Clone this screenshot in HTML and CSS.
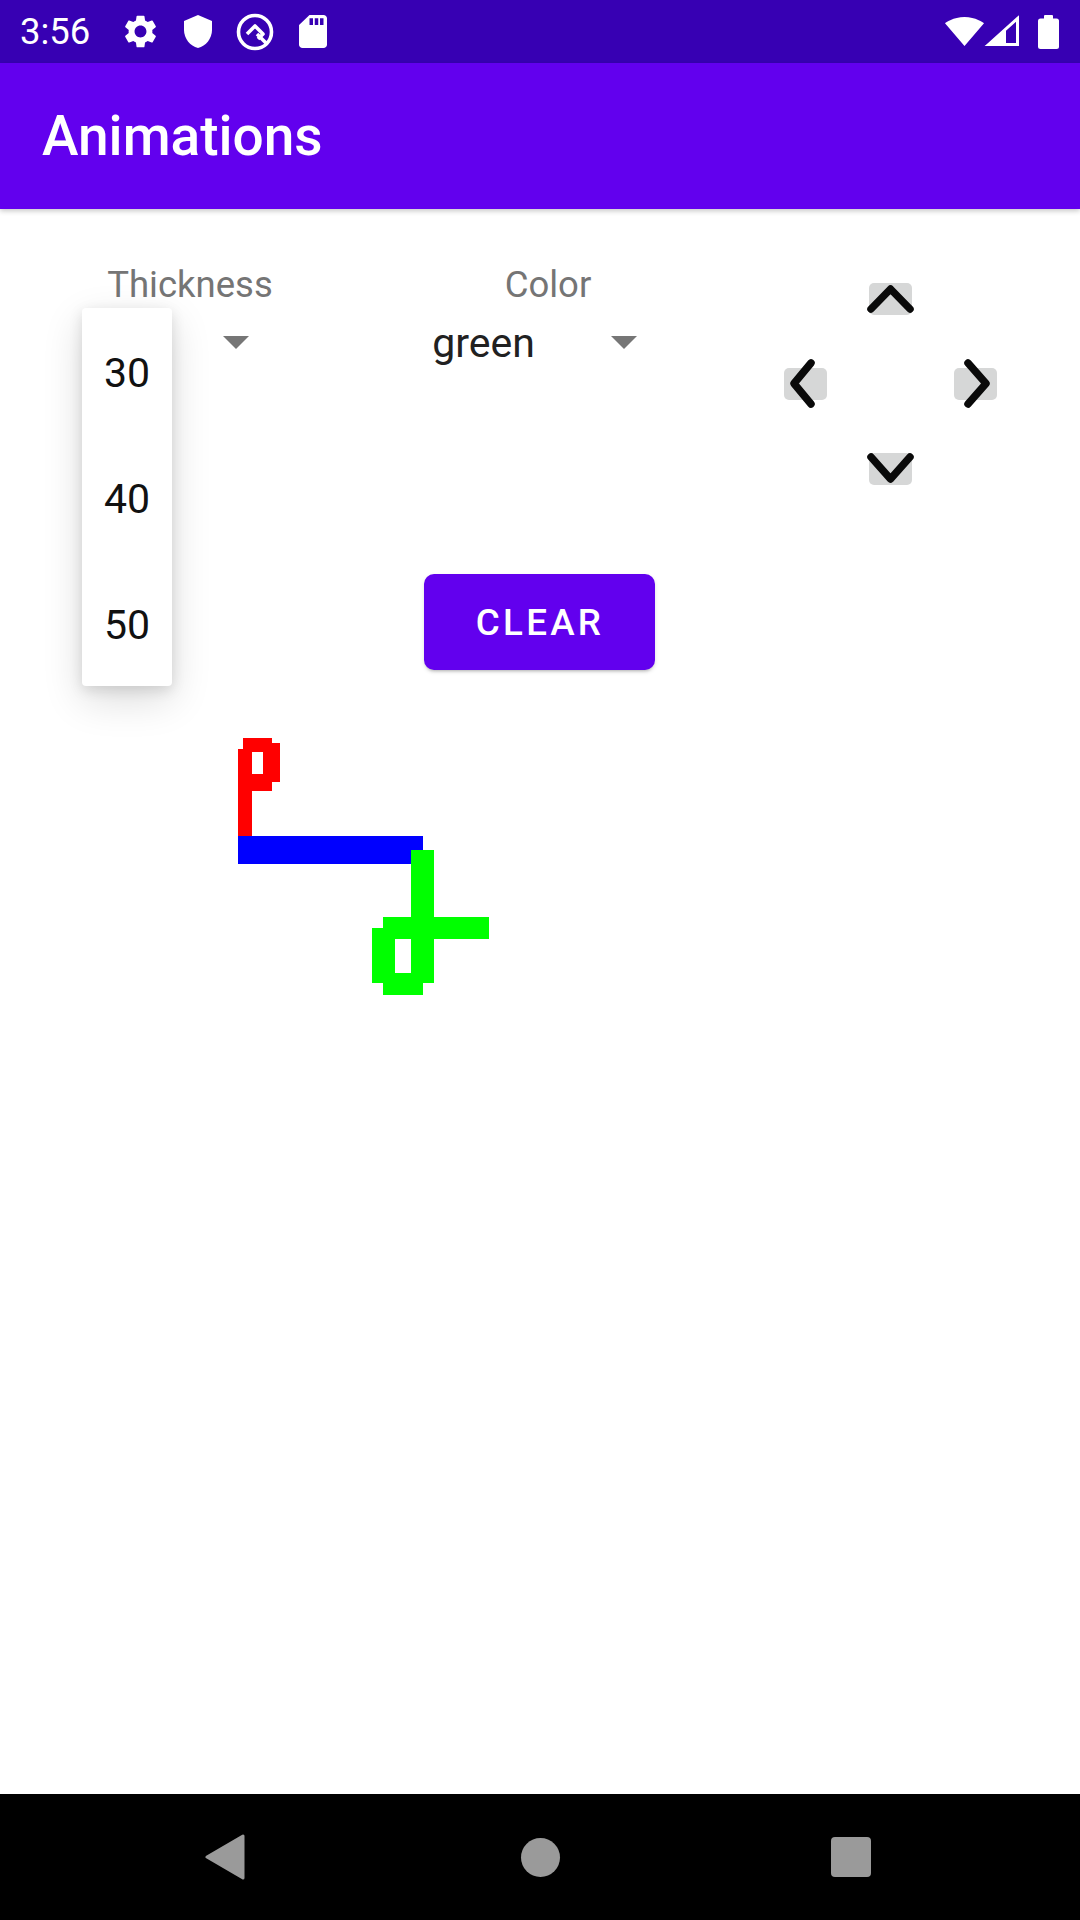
FILE: index.html
```html
<!DOCTYPE html>
<html lang="en">
<head>
<meta charset="utf-8">
<title>Animations</title>
<link rel="stylesheet" href="styles.css">
</head>
<body>
<div class="screen">
  <div class="statusbar">
    <div class="status-left">
      <span class="time">3:56</span>
      <svg class="ic ic-gear" viewBox="2 2 20 20"><path fill="#fff" d="M19.14 12.94c.04-.3.06-.61.06-.94 0-.32-.02-.64-.07-.94l2.030-1.58a.49.49 0 0 0 .12-.61l-1.92-3.32a.488.488 0 0 0-.59-.22l-2.39.96c-.5-.38-1.030-.7-1.62-.94l-.36-2.54a.484.484 0 0 0-.48-.41h-3.84c-.24 0-.43.17-.47.41l-.36 2.54c-.59.24-1.13.57-1.62.94l-2.39-.96c-.22-.08-.47 0-.59.22L2.74 8.87c-.12.21-.08.47.12.61l2.030 1.58c-.05.3-.09.63-.09.94s.02.64.07.94l-2.030 1.58a.49.49 0 0 0-.12.61l1.92 3.32c.12.22.37.29.59.22l2.39-.96c.5.38 1.030.7 1.62.94l.36 2.54c.05.24.24.41.48.41h3.84c.24 0 .44-.17.47-.41l.36-2.54c.59-.24 1.13-.56 1.62-.94l2.39.96c.22.08.47 0 .59-.22l1.92-3.32c.12-.22.07-.47-.12-.61l-2.01-1.58zM12 15.6c-1.98 0-3.6-1.62-3.6-3.6s1.62-3.6 3.6-3.6 3.6 1.62 3.6 3.6-1.62 3.6-3.6 3.6z"/></svg>
      <svg class="ic ic-shield" viewBox="3 1 18 22" preserveAspectRatio="none"><path fill="#fff" d="M12 1L3 5v6c0 5.55 3.84 10.74 9 12 5.16-1.26 9-6.45 9-12V5l-9-4z"/></svg>
      <svg class="ic ic-q" viewBox="0 0 38 38"><circle cx="19" cy="19" r="16.5" fill="none" stroke="#fff" stroke-width="3.6"/><path d="M11 21 L19 13 L27 21 L22 26" fill="none" stroke="#fff" stroke-width="3.6" stroke-linejoin="round"/><path d="M21 21 L31 31" stroke="#fff" stroke-width="3.6"/></svg>
      <svg class="ic ic-sd" viewBox="4 2 16 20" preserveAspectRatio="none"><path fill="#fff" d="M18 2h-8L4.02 8 4 20c0 1.1.9 2 2 2h12c1.1 0 2-.9 2-2V4c0-1.1-.9-2-2-2zm-6 6h-2V4h2v4zm3 0h-2V4h2v4zm3 0h-2V4h2v4z"/></svg>
    </div>
    <div class="status-right">
      <svg class="ic ic-wifi" viewBox="0.36 3 23.28 18.5" preserveAspectRatio="none"><path fill="#fff" d="M12.01 21.49L23.64 7c-.45-.34-4.93-4-11.64-4C5.28 3 .81 6.66.36 7l11.63 14.49.01.01.01-.01z"/></svg>
      <svg class="ic ic-signal" viewBox="0 0 32 29"><path d="M1.5 27.5 L30.5 1.5 L30.5 27.5 Z" fill="none" stroke="#fff" stroke-width="3" stroke-linejoin="miter"/><path d="M0 29 L19 12 L19 29 Z" fill="#fff"/></svg>
      <svg class="ic ic-battery" viewBox="0 0 21 34"><rect x="6" y="0" width="9" height="5" rx="1" fill="#fff"/><rect x="0" y="3.5" width="21" height="30.5" rx="2.5" fill="#fff"/></svg>
    </div>
  </div>

  <header class="appbar">
    <h1 class="title">Animations</h1>
  </header>

  <main class="content">
    <div class="controls">
      <div class="field field-thickness">
        <div class="label">Thickness</div>
        <div class="spinner">
          <span class="spinner-text spinner-text-hidden">30</span>
          <span class="caret"></span>
        </div>
      </div>
      <div class="field field-color">
        <div class="label">Color</div>
        <div class="spinner">
          <span class="spinner-text">green</span>
          <span class="caret"></span>
        </div>
      </div>
      <div class="dpad">
        <div class="dbtn dbtn-up"><svg viewBox="0 0 43 32"><path d="M2 26 L21.5 6 L41 26"/></svg></div>
        <div class="dbtn dbtn-left"><svg viewBox="0 0 43 32"><path d="M27 -5 L10 15.5 L27 36"/></svg></div>
        <div class="dbtn dbtn-right"><svg viewBox="0 0 43 32"><path d="M14 -5 L32 15.5 L14 36"/></svg></div>
        <div class="dbtn dbtn-down"><svg viewBox="0 0 43 32"><path d="M2 4 L21.5 26 L41 4"/></svg></div>
      </div>
    </div>

    <div class="actions">
      <button class="btn">Clear</button>
    </div>

    <div class="canvas">
      <svg class="drawing" viewBox="0 670 1080 1124" width="1080" height="1124">
        <g fill="#ff0000">
          <rect x="243" y="738" width="29" height="14"/>
          <rect x="263" y="743" width="17" height="39"/>
          <rect x="238" y="749" width="14" height="87"/>
          <rect x="238" y="774" width="34" height="17"/>
        </g>
        <rect x="238" y="836" width="185" height="28" fill="#0000ff"/>
        <g fill="#00ff00">
          <rect x="411" y="850" width="23" height="133"/>
          <rect x="383" y="917" width="106" height="22"/>
          <rect x="372" y="928" width="23" height="55"/>
          <rect x="372" y="973" width="62" height="10"/>
          <rect x="383" y="983" width="40" height="12"/>
        </g>
      </svg>
    </div>

    <ul class="popup">
      <li class="popup-item">30</li>
      <li class="popup-item">40</li>
      <li class="popup-item">50</li>
    </ul>
  </main>

  <nav class="navbar">
    <div class="nav-cell">
      <svg class="nav-back" viewBox="0 0 42 46"><path d="M39 2 L39 44 L3 23 Z" fill="#9a9a9a" stroke="#9a9a9a" stroke-width="3" stroke-linejoin="round"/></svg>
    </div>
    <div class="nav-cell"><span class="nav-home"></span></div>
    <div class="nav-cell"><span class="nav-recent"></span></div>
  </nav>
</div>
</body>
</html>
```

FILE: styles.css
```css
* { box-sizing: border-box; }

html, body {
  margin: 0;
  padding: 0;
  background: #ffffff;
}

body {
  font-family: Roboto, "Noto Sans", "Liberation Sans", sans-serif;
}

.screen {
  width: 1080px;
  height: 1920px;
  display: flex;
  flex-direction: column;
  overflow: hidden;
}

/* Status bar */
.statusbar {
  height: 63px;
  flex: 0 0 63px;
  background: #3700b3;
  display: flex;
  align-items: center;
  justify-content: space-between;
  padding-right: 21px;
  color: #fff;
}

.status-left,
.status-right {
  display: flex;
  align-items: center;
}

.time {
  width: 120px;
  padding-left: 20px;
  font-size: 36.5px;
  line-height: 63px;
  font-weight: 400;
}

.ic { display: block; }

.ic-gear { width: 33px; height: 33px; margin-left: 4px; }
.ic-shield { width: 28px; height: 33px; margin-left: 27px; }
.ic-q { width: 38px; height: 38px; margin-left: 24px; }
.ic-sd { width: 28px; height: 33px; margin-left: 25px; }

.ic-wifi { width: 39px; height: 29px; }
.ic-signal { width: 32px; height: 29px; margin-left: 3px; overflow: visible; }
.ic-battery { width: 21px; height: 34px; margin-left: 19px; }

/* App bar */
.appbar {
  height: 146px;
  flex: 0 0 146px;
  background: #6200ee;
  display: flex;
  align-items: center;
  padding-left: 42px;
  box-shadow: 0 2px 5px rgba(0, 0, 0, 0.22);
  position: relative;
  z-index: 2;
}

.title {
  margin: 0;
  color: #fff;
  font-size: 55px;
  font-weight: 500;
  line-height: 64px;
}

/* Content */
.content {
  flex: 1 1 auto;
  position: relative;
  display: flex;
  flex-direction: column;
  background: #fff;
}

.controls {
  display: flex;
  align-items: flex-start;
}

.field {
  display: flex;
  flex-direction: column;
  align-items: center;
  padding-top: 54px;
}

.field-thickness { width: 380px; }
.field-color { width: 336px; }

.label {
  font-size: 36.5px;
  line-height: 43px;
  color: #757575;
}

.spinner {
  display: flex;
  align-items: center;
  margin-top: 13px;
  padding-left: 16px;
  padding-right: 43px;
}

.spinner-text {
  font-size: 41px;
  line-height: 48px;
  color: #212121;
}

.spinner-text-hidden {
  visibility: hidden;
}

.caret {
  width: 0;
  height: 0;
  margin-left: 76px;
  margin-top: -2px;
  border-left: 13px solid transparent;
  border-right: 13px solid transparent;
  border-top: 13px solid #767676;
}

.field-thickness .caret { margin-left: 73px; }

.dpad {
  margin-left: 68px;
  margin-top: 74px;
  display: grid;
  grid-template-columns: 43px 43px 43px;
  grid-template-rows: 32px 32px 32px;
  column-gap: 42px;
  row-gap: 53px;
}

.dbtn {
  width: 43px;
  height: 32px;
  background: #d6d7d7;
  border-radius: 5px;
}

.dbtn svg {
  display: block;
  width: 43px;
  height: 32px;
  overflow: visible;
}

.dbtn path {
  fill: none;
  stroke: #0a0a0a;
  stroke-width: 7.5;
  stroke-linecap: round;
  stroke-linejoin: round;
}

.dbtn-up { grid-column: 2; grid-row: 1; }
.dbtn-left { grid-column: 1; grid-row: 2; }
.dbtn-right { grid-column: 3; grid-row: 2; }
.dbtn-down { grid-column: 2; grid-row: 3; }

.actions {
  display: flex;
  justify-content: center;
  padding-top: 89px;
}

.btn {
  width: 231px;
  height: 96px;
  border: none;
  border-radius: 10px;
  background: #6200ee;
  color: #fff;
  font-family: Roboto, "Noto Sans", "Liberation Sans", sans-serif;
  font-size: 36.75px;
  font-weight: 500;
  letter-spacing: 3.3px;
  text-transform: uppercase;
  padding: 0 0 0 2px;
  margin-left: -2px;
  box-shadow: 0 3px 3px -2px rgba(0, 0, 0, 0.2), 0 2px 4px rgba(0, 0, 0, 0.12);
}

.canvas {
  flex: 1 1 auto;
}

.drawing {
  display: block;
  shape-rendering: crispEdges;
}

/* Dropdown popup */
.popup {
  position: absolute;
  left: 82px;
  top: 99px;
  width: 90px;
  margin: 0;
  padding: 0;
  list-style: none;
  background: #fff;
  border-radius: 4px;
  box-shadow: 0 14px 40px rgba(0, 0, 0, 0.14), 0 4px 14px rgba(0, 0, 0, 0.12);
  z-index: 3;
}

.popup-item {
  height: 126px;
  display: flex;
  align-items: center;
  justify-content: center;
  padding-top: 3px;
  font-size: 41px;
  line-height: 48px;
  color: #111;
}

/* Navigation bar */
.navbar {
  height: 126px;
  flex: 0 0 126px;
  background: #000;
  display: grid;
  grid-template-columns: 315px 315px 315px;
  justify-content: center;
  align-items: center;
}

.nav-cell {
  display: flex;
  justify-content: center;
  align-items: center;
}

.nav-back {
  width: 42px;
  height: 46px;
  display: block;
}

.nav-home {
  width: 39px;
  height: 39px;
  border-radius: 50%;
  background: #9a9a9a;
}

.nav-recent {
  width: 40px;
  height: 40px;
  border-radius: 4px;
  background: #9a9a9a;
  margin-left: -8px;
}
```
